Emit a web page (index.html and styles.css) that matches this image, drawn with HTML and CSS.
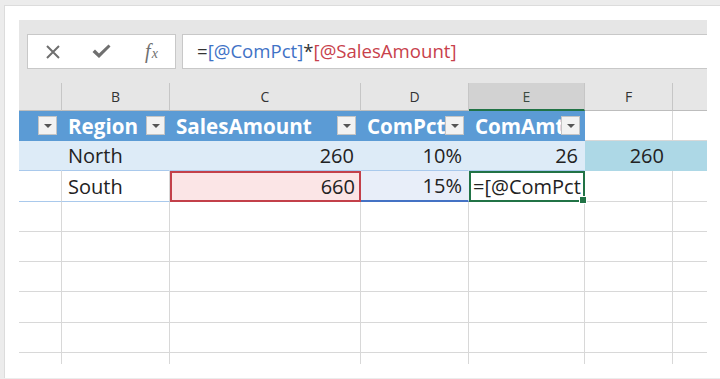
FILE: index.html
```html
<!DOCTYPE html>
<html lang="en">
<head>
<meta charset="UTF-8">
<meta name="viewport" content="width=device-width, initial-scale=1.0">
<title>ComAmt formula</title>
<link rel="stylesheet" href="styles.css">
</head>
<body>
<div class="panel">
    <div class="formula-area">
        <div class="fx-buttons">
            <span class="icon">
                <svg width="16" height="16" viewBox="0 0 16 16"><path d="M2 2 L14 14 M14 2 L2 14" stroke="#6f6f6f" stroke-width="2" fill="none"/></svg>
            </span>
            <span class="icon">
                <svg width="19" height="15" viewBox="0 0 19 15"><path d="M0.5 8 L3 5.5 L7 9.5 L16.5 0.5 L18.5 2.5 L7 14 Z" fill="#6f6f6f"/></svg>
            </span>
            <span class="icon fx"><i>f</i><i class="x">x</i></span>
        </div>
        <div class="formula-input">=<span class="ref-blue">[@ComPct]</span>*<span class="ref-red">[@SalesAmount]</span></div>
    </div>

    <div class="sheet">
        <!-- letras de columna -->
        <div class="c colhead"></div>
        <div class="c colhead">B</div>
        <div class="c colhead">C</div>
        <div class="c colhead">D</div>
        <div class="c colhead active">E</div>
        <div class="c colhead">F</div>
        <div class="c colhead last"></div>

        <!-- encabezado de la tabla -->
        <div class="c th"><span class="label"></span><span class="filter"></span></div>
        <div class="c th"><span class="label">Region</span><span class="filter"></span></div>
        <div class="c th"><span class="label">SalesAmount</span><span class="filter"></span></div>
        <div class="c th"><span class="label">ComPct</span><span class="filter"></span></div>
        <div class="c th"><span class="label">ComAmt</span><span class="filter"></span></div>
        <div class="c"></div>
        <div class="c last"></div>

        <!-- North -->
        <div class="c band"></div>
        <div class="c band">North</div>
        <div class="c band num">260</div>
        <div class="c band num">10%</div>
        <div class="c band num">26</div>
        <div class="c extra num">260</div>
        <div class="c extra last"></div>

        <!-- South -->
        <div class="c south"></div>
        <div class="c south">South</div>
        <div class="c south num ref-red-box">660</div>
        <div class="c south num ref-blue-box">15%</div>
        <div class="c editing"><span class="edit-text">=[@ComPct</span><span class="handle"></span></div>
        <div class="c"></div>
        <div class="c last"></div>

        <div class="c"></div><div class="c"></div><div class="c"></div><div class="c"></div><div class="c"></div><div class="c"></div><div class="c last"></div>
        <div class="c"></div><div class="c"></div><div class="c"></div><div class="c"></div><div class="c"></div><div class="c"></div><div class="c last"></div>
        <div class="c"></div><div class="c"></div><div class="c"></div><div class="c"></div><div class="c"></div><div class="c"></div><div class="c last"></div>
        <div class="c"></div><div class="c"></div><div class="c"></div><div class="c"></div><div class="c"></div><div class="c"></div><div class="c last"></div>
        <div class="c"></div><div class="c"></div><div class="c"></div><div class="c"></div><div class="c"></div><div class="c"></div><div class="c last"></div>
        <div class="c end"></div><div class="c end"></div><div class="c end"></div><div class="c end"></div><div class="c end"></div><div class="c end"></div><div class="c end last"></div>
    </div>
</div>
</body>
</html>
```

FILE: styles.css
```css
body {
    margin: 0;
    background-color: #ececec;
    font-family: "Open Sans", "Noto Sans", sans-serif;
}
.panel {
    margin: 5px 0 0 4px;
    height: 373px;
    background-color: #fff;
    border-left: 1px solid #dcdcdc;
    border-top: 1px solid #dcdcdc;
    padding: 14px 0 0 14px;
    box-sizing: border-box;
}

/* barra de formulas */
.formula-area {
    width: 688px;
    box-sizing: border-box;
    background-color: #e6e6e6;
    padding: 14px 0 14px 8px;
    display: flex;
    gap: 6px;
}
.fx-buttons {
    width: 149px;
    height: 35px;
    box-sizing: border-box;
    background-color: #fff;
    border: 1px solid #c8c8c8;
    display: grid;
    grid-template-columns: repeat(3, 1fr);
    align-items: center;
    justify-items: center;
}
.icon {
    display: flex;
    align-items: center;
}
.fx {
    font-family: "Liberation Serif", serif;
    color: #707070;
    font-size: 20px;
    padding-left: 2px;
}
.fx .x {
    font-size: 14px;
    margin-left: 1px;
    position: relative;
    top: 2px;
}
.formula-input {
    flex: 1;
    height: 35px;
    box-sizing: border-box;
    background-color: #fff;
    border: 1px solid #c8c8c8;
    border-right: none;
    padding-left: 14px;
    font-size: 18.6px;
    line-height: 32px;
    color: #333;
}
.ref-blue { color: #3f72c6; }
.ref-red { color: #c8414b; }

/* hoja */
.sheet {
    width: 688px;
    display: grid;
    grid-template-columns: 43px 108px 191px 108px 116px 88px 34px;
    grid-template-rows: 28px 30px 30px 31px 30px 30px 30px 31px 30px 11px;
}
.c {
    box-sizing: border-box;
    border-right: 1px solid #d8d8d8;
    border-bottom: 1px solid #d8d8d8;
    display: flex;
    align-items: center;
    padding: 0 6px;
    font-size: 20px;
    color: #222;
    white-space: nowrap;
    overflow: hidden;
}
.c.last { border-right: none; }
.c.end { border-bottom: none; }
.num { justify-content: flex-end; }

.colhead {
    background-color: #e6e6e6;
    border-right-color: #c6c6c6;
    border-bottom-color: #bdbdbd;
    justify-content: center;
    font-size: 14px;
    color: #333;
}
.colhead.active {
    background-color: #d2d2d2;
    border-bottom: 2px solid #217346;
    color: #3a4a40;
}

.th {
    background-color: #5b9bd5;
    border-color: #5b9bd5;
    color: #fff;
    font-weight: bold;
    font-size: 20.6px;
    padding: 0 4px 0 6px;
}
.th:first-child {
    padding-right: 2px;
}
.th .label {
    flex: 1;
    min-width: 0;
    overflow: hidden;
}
.filter {
    width: 19px;
    height: 19px;
    box-sizing: border-box;
    background-color: #f2f2f2;
    border: 1px solid #c4c4c4;
    display: flex;
    align-items: center;
    justify-content: center;
    flex-shrink: 0;
}
.filter::after {
    content: "";
    border-left: 4px solid transparent;
    border-right: 4px solid transparent;
    border-top: 4px solid #555;
}

.band {
    background-color: #ddebf7;
    border-right-color: #ddebf7;
    border-bottom-color: #a9c9ec;
}
.extra {
    background-color: #add8e6;
    border-color: #add8e6;
    padding-right: 8px;
}
.south {
    border-bottom-color: #a9c9ec;
}
.ref-red-box {
    background-color: #fbe5e6;
    border: 2px solid #c3404a;
    padding-right: 4px;
}
.ref-blue-box {
    background-color: #e8eef9;
    border-right-color: #e8eef9;
    border-bottom: 2px solid #4472c4;
}
.editing {
    border: 2px solid #217346;
    padding: 0 0 0 2px;
    overflow: visible;
    position: relative;
}
.edit-text {
    overflow: hidden;
    flex: 1;
}
.handle {
    position: absolute;
    right: -4px;
    bottom: -4px;
    width: 6px;
    height: 6px;
    background-color: #217346;
    border: 1px solid #fff;
}
```
